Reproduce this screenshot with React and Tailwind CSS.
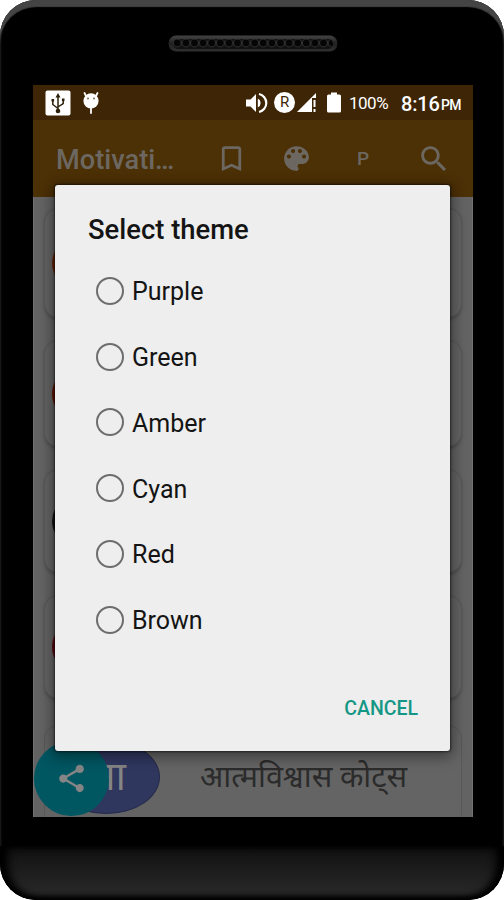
import React from "react";

const THEMES = ["Purple", "Green", "Amber", "Cyan", "Red", "Brown"];

const ROWS = [
  { color: "bg-[#682400]", box: "mt-[11px] h-[110px]" },
  { color: "bg-[#651500]", box: "mt-[22px] h-[107px]" },
  { color: "bg-[#111111]", box: "mt-[22px] h-[104px]" },
  { color: "bg-[#5f0712]", box: "mt-[22px] h-[104px]" },
];

function Icon({ d, className }) {
  return (
    <svg viewBox="0 0 24 24" fill="currentColor" className={`shrink-0 ${className}`}>
      <path d={d} />
    </svg>
  );
}

const BOOKMARK = "M17 3H7c-1.1 0-1.99.9-1.99 2L5 21l7-3 7 3V5c0-1.1-.9-2-2-2zm0 15l-5-2.18L7 18V5h10v13z";
const PALETTE =
  "M12 3c-4.97 0-9 4.03-9 9s4.03 9 9 9c.83 0 1.5-.67 1.5-1.5 0-.39-.15-.74-.39-1.01-.23-.26-.38-.61-.38-.99 0-.83.67-1.5 1.5-1.5H16c2.76 0 5-2.24 5-5 0-4.42-4.03-8-9-8zm-5.5 9c-.83 0-1.5-.67-1.5-1.5S5.67 9 6.5 9 8 9.67 8 10.5 7.33 12 6.5 12zm3-4C8.67 8 8 7.33 8 6.5S8.67 5 9.5 5s1.5.67 1.5 1.5S10.33 8 9.5 8zm5 0c-.83 0-1.5-.67-1.5-1.5S13.67 5 14.5 5s1.5.67 1.5 1.5S15.33 8 14.5 8zm3 4c-.83 0-1.5-.67-1.5-1.5S16.67 9 17.5 9s1.5.67 1.5 1.5-.67 1.5-1.5 1.5z";
const SEARCH =
  "M15.5 14h-.79l-.28-.27C15.41 12.59 16 11.11 16 9.5 16 5.91 13.09 3 9.5 3S3 5.91 3 9.5 5.91 16 9.5 16c1.61 0 3.09-.59 4.23-1.57l.27.28v.79l5 4.99L20.49 19l-4.99-5zm-6 0C7.01 14 5 11.99 5 9.5S7.01 5 9.5 5 14 7.01 14 9.5 11.99 14 9.5 14z";
const SHARE =
  "M18 16.08c-.76 0-1.44.3-1.96.77L8.91 12.7c.05-.23.09-.46.09-.7s-.04-.47-.09-.7l7.05-4.11c.54.5 1.25.81 2.04.81 1.66 0 3-1.34 3-3s-1.34-3-3-3-3 1.34-3 3c0 .24.04.47.09.7L8.04 9.81C7.5 9.31 6.79 9 6 9c-1.66 0-3 1.34-3 3s1.34 3 3 3c.79 0 1.5-.31 2.04-.81l7.12 4.16c-.05.21-.08.43-.08.65 0 1.61 1.31 2.92 2.92 2.92 1.61 0 2.92-1.31 2.92-2.92s-1.31-2.92-2.92-2.92z";

function Speaker() {
  return (
    <svg viewBox="0 0 170 18" className="h-[18px] w-[170px]">
      <defs>
        <pattern id="mesh" width="8.6" height="12" patternUnits="userSpaceOnUse" x="5" y="3">
          <circle cx="4.3" cy="5" r="3.9" fill="#050505" stroke="#303030" strokeWidth="1" />
        </pattern>
        <linearGradient id="rim" x1="0" y1="0" x2="0" y2="1">
          <stop offset="0" stopColor="#444444" />
          <stop offset="0.5" stopColor="#202020" />
          <stop offset="1" stopColor="#303030" />
        </linearGradient>
      </defs>
      <rect x="0.5" y="0.5" width="169" height="16" rx="8" fill="url(#rim)" />
      <rect x="5" y="4" width="160" height="10" rx="5" fill="#111111" />
      <rect x="5" y="4" width="160" height="10" rx="5" fill="url(#mesh)" />
    </svg>
  );
}

function StatusBar() {
  return (
    <div className="flex h-[35px] shrink-0 items-center bg-[#3e2505] text-white">
      <svg viewBox="0 0 26 26" className="ml-[12px] size-[26px] shrink-0">
        <rect x="0.5" y="0.5" width="25" height="25" rx="2" fill="#fff" />
        <path d="M13 5v16M13 18.500l-5.200-4v-3.500M13 17l5.200-3.500V10" fill="none" stroke="#2c2008" strokeWidth="1.5" />
        <path d="M13 3l2.500 4.500h-5zM6.500 9h2.600v2.600H6.500zM16.900 8.500h2.600v2.600h-2.600z" fill="#2c2008" />
        <circle cx="13" cy="21" r="2.300" fill="#2c2008" />
      </svg>
      <svg viewBox="0 0 18 24" className="ml-[11px] h-[24px] w-[18px] shrink-0">
        <path d="M2.500 2l2 4M15.500 2l-2 4M9 15v7" fill="none" stroke="#fff" strokeWidth="1.8" strokeLinecap="round" />
        <circle cx="9" cy="9.800" r="7.600" fill="#fff" />
        <circle cx="6" cy="7.500" r="1" fill="#7b6a52" />
        <circle cx="12" cy="7.500" r="1" fill="#7b6a52" />
      </svg>
      <svg viewBox="0 0 24 22" className="ml-[145px] h-[22px] w-[24px] shrink-0">
        <path d="M1 7.500h4.500L11 2v18l-5.500-5.500H1z" fill="#fff" />
        <path d="M12.800 6.500a5 5 0 0 1 0 9z" fill="#fff" />
        <path d="M14 2a9.200 9.200 0 0 1 0 18" fill="none" stroke="#fff" strokeWidth="2.200" />
      </svg>
      <div className="ml-[5px] flex size-[21px] shrink-0 items-center justify-center rounded-full bg-white text-[15px] text-[#3e2505]">
        R
      </div>
      <svg viewBox="0 0 22 21" className="ml-[1px] h-[21px] w-[22px] shrink-0">
        <path d="M1 20L20 1v5h-4v14z" fill="#fff" />
        <path d="M18.500 8v7M18.500 17v3" stroke="#fff" strokeWidth="2" />
      </svg>
      <svg viewBox="0 0 14 21" className="ml-[9px] h-[21px] w-[14px] shrink-0">
        <path d="M4 0.500h6v2h2.500q1.500 0 1.500 1.500v15q0 1.500-1.500 1.500h-11Q0 20.500 0 19V4q0-1.500 1.500-1.500H4z" fill="#fff" />
      </svg>
      <span className="ml-[8px] mt-[2px] w-[40px] shrink-0 whitespace-nowrap text-[17px] tracking-[-0.5px]">100%</span>
      <span className="ml-[12px] mt-[2px] w-[38px] shrink-0 whitespace-nowrap text-[20px] font-medium tracking-[-0.2px]">8:16</span>
      <span className="ml-[2px] mt-[5px] shrink-0 whitespace-nowrap text-[14px] font-medium tracking-[-0.6px]">PM</span>
    </div>
  );
}

function AppBar() {
  return (
    <div className="flex h-[77px] shrink-0 items-center bg-[#4c3006] text-[#6c6861]">
      <span className="ml-[23px] mt-[3px] w-[120px] shrink-0 whitespace-nowrap text-[27.200px] font-medium">Motivati…</span>
      <Icon d={BOOKMARK} className="ml-[39px] size-[33px]" />
      <Icon d={PALETTE} className="ml-[32px] size-[33px]" />
      <span className="ml-[44px] mt-[2px] w-[14px] shrink-0 text-[19px] font-medium">P</span>
      <Icon d={SEARCH} className="ml-[46px] size-[34px]" />
    </div>
  );
}

function QuoteList() {
  return (
    <div className="flex grow flex-col overflow-hidden border-x border-[#727272] bg-[#636363] px-[10px]">
      {ROWS.map((row) => (
        <div
          key={row.color}
          className={`flex shrink-0 items-center rounded-[14px] border border-[#585858] bg-[#646464] pl-[7px] shadow-[0_2px_3px_#505050] ${row.box}`}
        >
          <div className={`h-[74px] w-[108px] rounded-[50%] ${row.color}`} />
        </div>
      ))}
      <div className="mt-[26px] flex h-[104px] shrink-0 items-center rounded-[14px] border border-[#585858] bg-[#646464] pl-[7px]">
        <div className="flex h-[74px] w-[108px] shrink-0 items-center rounded-[50%] border border-[#252a4c] bg-[#30375f] pl-[32px] text-[40px] text-[#858585]">
          आ
        </div>
        <span className="ml-[40px] whitespace-nowrap text-[30.500px] leading-[40px] text-[#2b2b2b]">आत्मविश्वास कोट्स</span>
      </div>
    </div>
  );
}

function ThemeDialog() {
  return (
    <div className="absolute left-[22px] top-[100px] flex h-[566px] w-[395px] flex-col rounded-[3px] bg-[#eeeeee] text-[#141414] shadow-[0_3px_14px_3px_rgba(0,0,0,0.4),0_0_2px_1px_rgba(0,0,0,0.5)]">
      <h1 className="ml-[33px] mt-[29px] h-[33px] whitespace-nowrap text-[27.400px] font-medium leading-[33px]">Select theme</h1>
      <div className="mt-[11px] flex flex-col">
        {THEMES.map((name) => (
          <label key={name} className="flex h-[65.8px] items-center pl-[41px]">
            <span className="size-[28px] shrink-0 rounded-full border-[2.5px] border-[#6d6d6d]" />
            <span className="ml-[8px] mt-[2px] text-[25px]">{name}</span>
          </label>
        ))}
      </div>
      <button className="mr-[32px] mt-auto mb-[30px] self-end text-[19.500px] font-medium leading-[24px] text-[#159785]">CANCEL</button>
    </div>
  );
}

export default function App() {
  return (
    <div className="h-[900px] w-[504px] overflow-hidden bg-white font-[Roboto,'Noto_Sans_Devanagari','Noto_Sans',sans-serif]">
      <div className="flex h-[900px] flex-col overflow-hidden rounded-[36px] bg-black shadow-[inset_0_7px_1px_#444444,inset_0_3px_3px_#363636]">
        <div className="ml-[168px] flex h-[85px] shrink-0 pt-[35px]">
          <Speaker />
        </div>
        <div className="relative ml-[33px] flex h-[732px] w-[440px] shrink-0 flex-col overflow-hidden">
          <StatusBar />
          <AppBar />
          <QuoteList />
          <div className="absolute bottom-[1px] left-[1px] flex size-[75px] items-center justify-center rounded-full bg-[#005661] text-[#858585]">
            <Icon d={SHARE} className="size-[33px]" />
          </div>
          <ThemeDialog />
        </div>
        <div className="mt-[29px] w-full grow rounded-b-[36px] bg-linear-to-b from-[#111111] to-[#2b2b2b] shadow-[inset_0_-3px_5px_#000,inset_8px_0_8px_#000,inset_-8px_0_8px_#000]" />
      </div>
    </div>
  );
}
